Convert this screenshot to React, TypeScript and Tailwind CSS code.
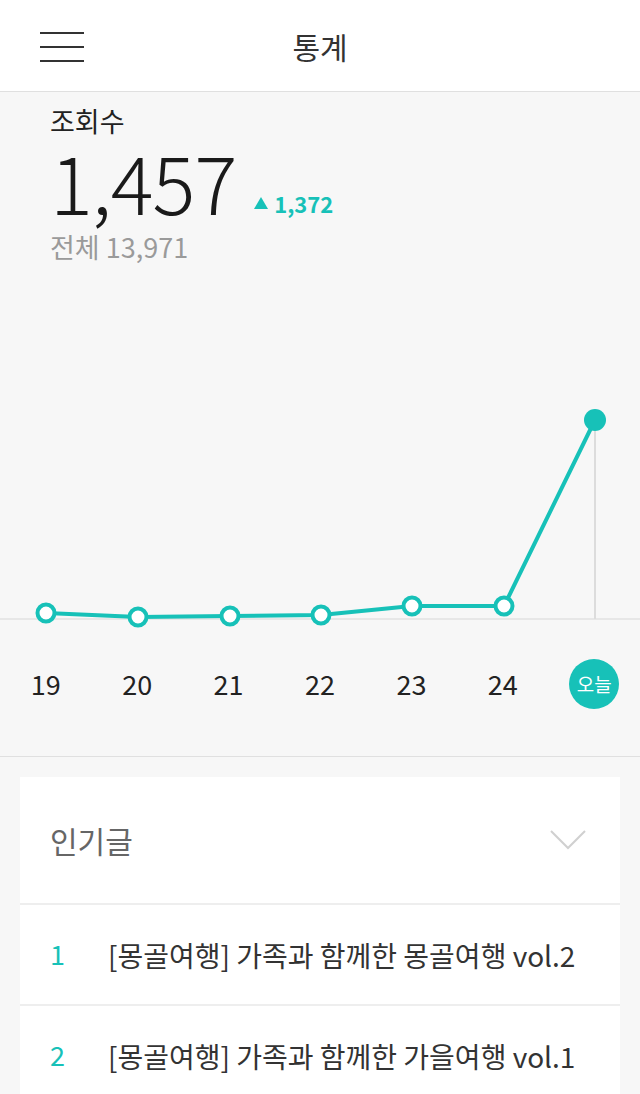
const TEAL = "#17c1b8";

const points = [
  { x: 46, y: 614 },
  { x: 138, y: 618 },
  { x: 230, y: 617 },
  { x: 321, y: 616 },
  { x: 412, y: 607 },
  { x: 504, y: 607 },
  { x: 595, y: 421 },
];

const labels = ["19", "20", "21", "22", "23", "24"];

const posts = [
  "[몽골여행] 가족과 함께한 몽골여행 vol.2",
  "[몽골여행] 가족과 함께한 가을여행 vol.1",
];

function Chart() {
  const top = 270;
  const pts = points.map((p) => ({ x: p.x, y: p.y - top }));
  const last = pts[pts.length - 1];
  return (
    <svg width="640" height="360" viewBox="0 0 640 360" className="block">
      <line x1="0" y1="350" x2="640" y2="350" stroke="#e2e2e2" strokeWidth="1.5" />
      <line x1={last.x} y1={last.y} x2={last.x} y2="350" stroke="#dcdcdc" strokeWidth="2" />
      <polyline
        points={pts.map((p) => `${p.x},${p.y}`).join(" ")}
        fill="none"
        stroke={TEAL}
        strokeWidth="4"
        strokeLinejoin="round"
      />
      {pts.slice(0, -1).map((p, i) => (
        <circle key={i} cx={p.x} cy={p.y} r="8.5" fill="#fff" stroke={TEAL} strokeWidth="4" />
      ))}
      <circle cx={last.x} cy={last.y} r="11" fill={TEAL} />
    </svg>
  );
}

export default function App() {
  return (
    <div
      className="w-[640px] h-[1094px] overflow-hidden bg-[#f7f7f7]"
      style={{ fontFamily: '"Noto Sans CJK KR", "Noto Sans", sans-serif' }}
    >
      <header className="relative flex h-[92px] items-center justify-center border-b border-[#e0e0e0] bg-white">
        <div className="absolute left-[40px] top-[32px] flex w-[44px] flex-col gap-[12px]">
          <span className="block h-[2px] bg-[#333]" />
          <span className="block h-[2px] bg-[#333]" />
          <span className="block h-[2px] bg-[#333]" />
        </div>
        <h1 className="text-[30px] leading-none text-[#333]">통계</h1>
      </header>

      <section className="border-b border-[#e0e0e0]">
        <div className="h-[177px] pl-[50px] pt-[12px]">
          <div className="text-[27px] leading-[34px] text-[#222]">조회수</div>
          <div className="flex items-end">
            <span className="text-[80px] font-light leading-[84px] tracking-[-1px] text-[#1a1a1a]">1,457</span>
            <span
              className="mb-[8px] ml-[18px] flex items-center gap-[6px] text-[22px] font-bold leading-none"
              style={{ color: TEAL }}
            >
              <svg width="14" height="12" viewBox="0 0 14 12">
                <path d="M7 0L14 12H0Z" fill={TEAL} />
              </svg>
              1,372
            </span>
          </div>
          <div className="mt-[8px] text-[27px] leading-[34px] text-[#9a9a9a]">전체 13,971</div>
        </div>

        <Chart />

        <div className="grid h-[127px] grid-cols-7 pt-[31px]">
          {labels.map((l) => (
            <div key={l} className="flex h-[48px] items-center justify-center text-[27px] text-[#222]">
              {l}
            </div>
          ))}
          <div className="flex h-[48px] items-center justify-center">
            <span
              className="flex h-[50px] w-[50px] items-center justify-center rounded-full text-[19px] text-white"
              style={{ backgroundColor: TEAL }}
            >
              오늘
            </span>
          </div>
        </div>
      </section>

      <div className="mx-[20px] mt-[20px] bg-white">
        <div className="flex h-[126px] items-center justify-between pl-[30px] pr-[34px]">
          <span className="text-[30px] text-[#666]">인기글</span>
          <svg width="36" height="20" viewBox="0 0 36 20">
            <path d="M1 1L18 18L35 1" fill="none" stroke="#d0d0d0" strokeWidth="2" />
          </svg>
        </div>
        {posts.map((p, i) => (
          <div key={i} className="flex h-[101px] items-center border-t-2 border-[#eeeeee] pl-[30px]">
            <span className="w-[58px] text-[27px]" style={{ color: TEAL }}>
              {i + 1}
            </span>
            <span className="text-[28px] text-[#333]">{p}</span>
          </div>
        ))}
      </div>
    </div>
  );
}
